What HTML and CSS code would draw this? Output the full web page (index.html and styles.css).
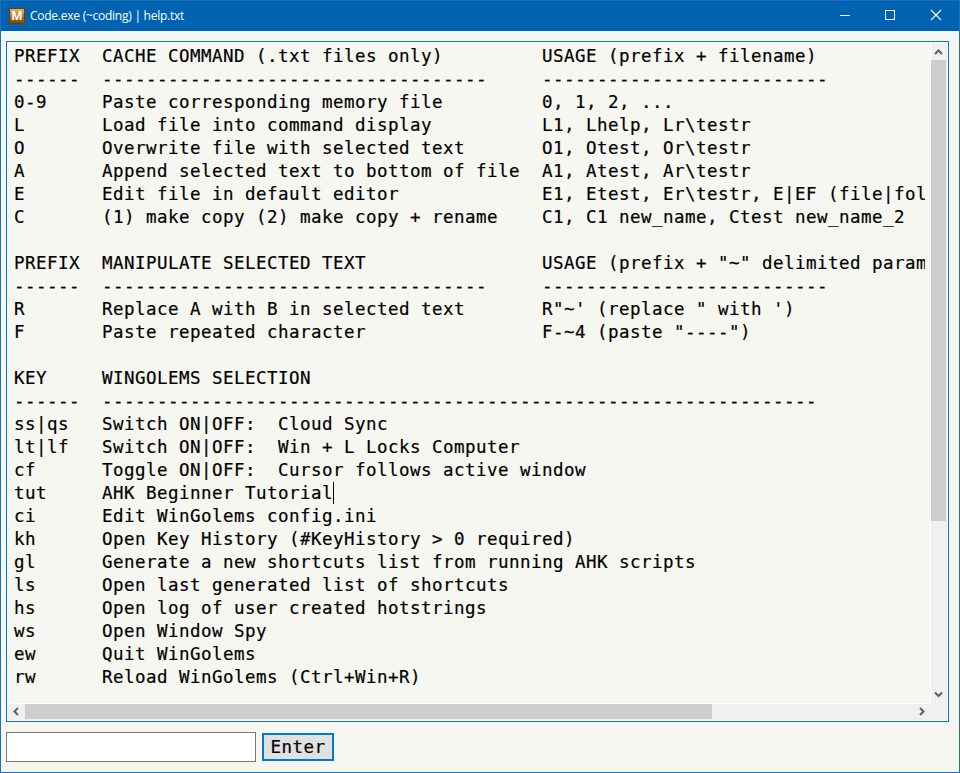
FILE: index.html
```html
<!DOCTYPE html>
<html lang="en">
<head>
<meta charset="utf-8">
<title>Code.exe (~coding) | help.txt</title>
<link rel="stylesheet" href="styles.css">
</head>
<body>
<div class="window">
  <header class="titlebar">
    <span class="app-icon">M</span>
    <span class="title">Code.exe (~coding) | help.txt</span>
    <div class="controls">
      <svg width="46" height="30" viewBox="0 0 46 30"><path d="M19 14.500h10" stroke="#fff"/></svg>
      <svg width="46" height="30" viewBox="0 0 46 30"><rect x="18.500" y="9.500" width="9" height="9" fill="none" stroke="#fff"/></svg>
      <svg width="46" height="30" viewBox="0 0 46 30"><path d="M18 9l10 10M28 9L18 19" stroke="#fff" stroke-width="1.100"/></svg>
    </div>
  </header>
  <main class="client">
    <section class="editor">
      <pre class="text">PREFIX  CACHE COMMAND (.txt files only)         USAGE (prefix + filename)
------  -----------------------------------     --------------------------
0-9     Paste corresponding memory file         0, 1, 2, ...
L       Load file into command display          L1, Lhelp, Lr\testr
O       Overwrite file with selected text       O1, Otest, Or\testr
A       Append selected text to bottom of file  A1, Atest, Ar\testr
E       Edit file in default editor             E1, Etest, Er\testr, E|EF (file|fol
C       (1) make copy (2) make copy + rename    C1, C1 new_name, Ctest new_name_2

PREFIX  MANIPULATE SELECTED TEXT                USAGE (prefix + "~" delimited param
------  -----------------------------------     --------------------------
R       Replace A with B in selected text       R"~' (replace " with ')
F       Paste repeated character                F-~4 (paste "----")

KEY     WINGOLEMS SELECTION
------  -----------------------------------------------------------------
ss|qs   Switch ON|OFF:  Cloud Sync
lt|lf   Switch ON|OFF:  Win + L Locks Computer
cf      Toggle ON|OFF:  Cursor follows active window
tut     AHK Beginner Tutorial<span class="caret"></span>
ci      Edit WinGolems config.ini
kh      Open Key History (#KeyHistory &gt; 0 required)
gl      Generate a new shortcuts list from running AHK scripts
ls      Open last generated list of shortcuts
hs      Open log of user created hotstrings
ws      Open Window Spy
ew      Quit WinGolems
rw      Reload WinGolems (Ctrl+Win+R)</pre>
      <div class="vbar">
        <svg width="16" height="17" viewBox="0 0 16 17"><path d="M4 11L7.500 7.500 11 11" class="arrow"/></svg>
        <div class="vthumb"></div>
        <svg class="end" width="16" height="17" viewBox="0 0 16 17"><path d="M4 6.500L7.500 10 11 6.500" class="arrow"/></svg>
      </div>
      <div class="hbar">
        <svg width="17" height="16" viewBox="0 0 17 16"><path d="M10 4L6.500 7.500 10 11" class="arrow"/></svg>
        <div class="hthumb"></div>
        <svg class="end" width="17" height="16" viewBox="0 0 17 16"><path d="M7 4l3.500 3.500L7 11" class="arrow"/></svg>
      </div>
      <div class="corner"></div>
    </section>
    <form class="command">
      <input class="field" type="text" aria-label="Command">
      <button class="enter" type="button">Enter</button>
    </form>
  </main>
</div>
</body>
</html>
```

FILE: styles.css
```css
* { box-sizing: border-box; }
body { margin: 0; overflow: hidden; }
svg { display: block; }
.window {
  width: 960px;
  height: 773px;
  border: 1px solid #1b72b8;
  background: #f6f7f1;
  display: flex;
  flex-direction: column;
}
.titlebar {
  height: 30px;
  flex: none;
  background: #0063b1;
  color: #fff;
  display: flex;
  align-items: center;
  padding-left: 8px;
}
.app-icon {
  width: 16px;
  height: 16px;
  border: 1px solid #6b3d0b;
  background: linear-gradient(#dcb468, #b47a1c 50%, #7c4a08);
  font: bold 12px/14px "Open Sans", sans-serif;
  text-align: center;
  display: flex;
  justify-content: center;
}
.title {
  margin-left: 5px;
  font: 12px/16px "Open Sans", "Noto Sans", sans-serif;
  letter-spacing: -0.25px;
  white-space: pre;
}
.controls { display: flex; margin-left: auto; }
.client { padding: 10px 10px 0 5px; }
.editor {
  width: 943px;
  height: 681px;
  border: 1px solid #0078d7;
  padding: 1px;
  background: #fff;
  display: grid;
  grid-template-columns: 923px 16px;
  grid-template-rows: 661px 16px;
}
.text {
  margin: 0 1px 1px 0;
  padding: 2px 0 0 6px;
  border-right: 5px solid #f6f7f1;
  background: #f6f7f1;
  overflow: hidden;
  color: #000;
  font: 17.5px/23px "DejaVu Sans Mono", monospace;
  letter-spacing: 0.464px;
  font-variant-ligatures: none;
  -webkit-text-stroke: 0.2px #000;
}
.caret {
  display: inline-block;
  width: 1px;
  height: 22px;
  margin-right: -1px;
  vertical-align: -5px;
  background: #000;
}
.vbar, .hbar { background: #f0f0f0; display: flex; }
.vbar { flex-direction: column; }
.vthumb { width: 15px; height: 461px; background: #cdcdcd; }
.hthumb { width: 687px; height: 15px; background: #cdcdcd; }
.vbar .end { margin-top: auto; margin-bottom: 1px; }
.hbar .end { margin-left: auto; margin-right: 1px; }
.corner { background: #f0f0f0; }
.arrow { fill: none; stroke: #606060; stroke-width: 2; }
.command { display: flex; align-items: center; gap: 6px; margin: 10px 0 0; }
.field {
  width: 250px;
  height: 30px;
  border: 1px solid #7a7a7a;
  border-radius: 0;
  background: #fff;
  padding: 0 4px;
  outline: none;
  font: 17.5px "DejaVu Sans Mono", monospace;
}
.enter {
  width: 72px;
  height: 28px;
  border: 2px solid #0078d7;
  border-radius: 0;
  background: #e1e1e1;
  color: #000;
  padding: 0;
  font: 17.5px/22px "DejaVu Sans Mono", monospace;
  letter-spacing: 0.464px;
  -webkit-text-stroke: 0.2px #000;
}
```
